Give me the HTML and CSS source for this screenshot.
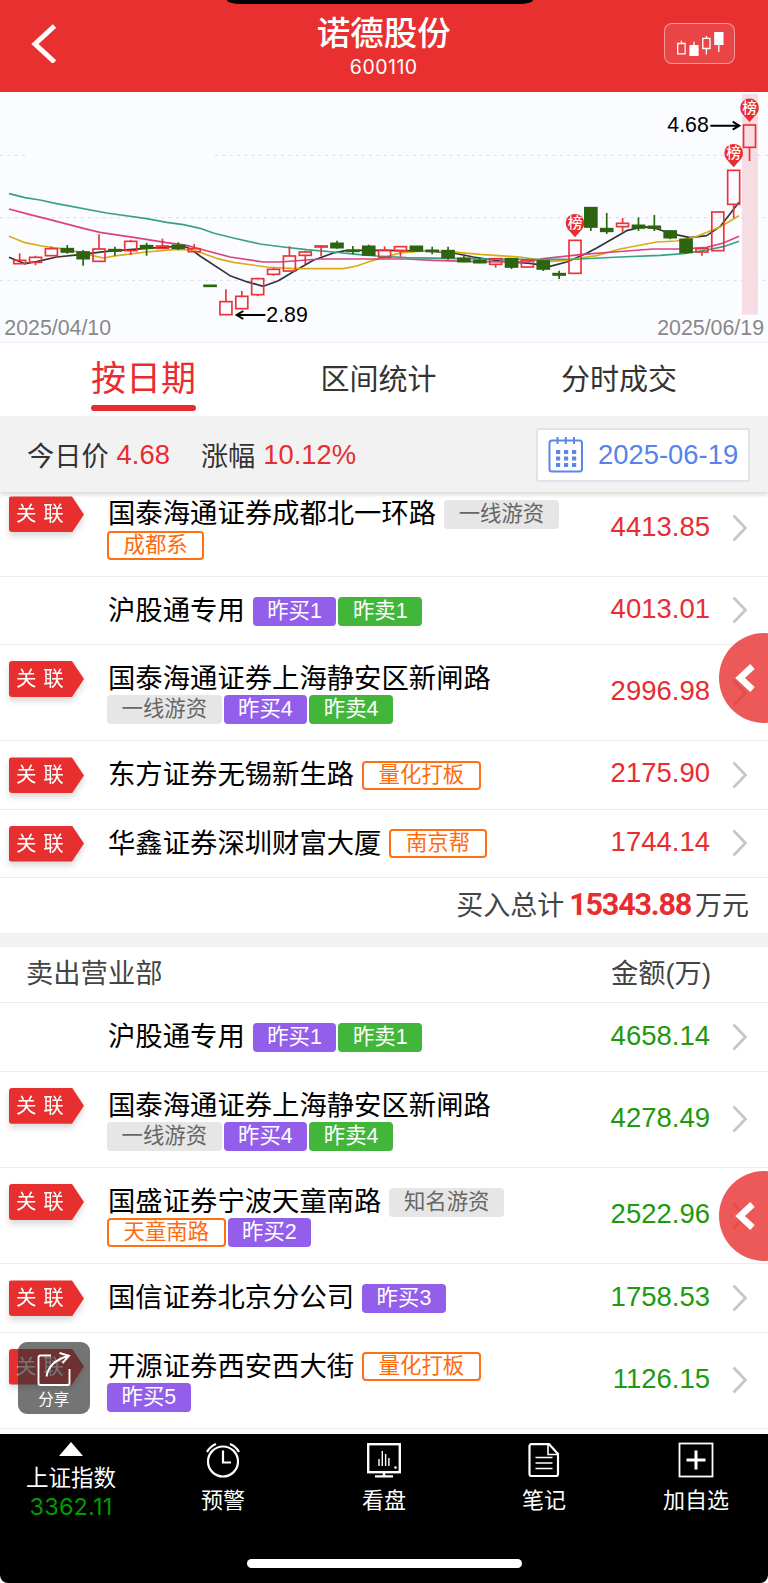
FILE: index.html
```html
<!DOCTYPE html>
<html lang="zh-CN">

<head>
    <meta charset="UTF-8">
    <meta name="viewport" content="width=device-width, initial-scale=1.0">
    <title>诺德股份 600110</title>
    <link rel="stylesheet" href="styles.css">
</head>

<body>
    <div class="page">
        <header class="header">
            <div class="notch"></div>
            <svg class="back" width="28" height="40" viewBox="0 0 28 40"><path d="M24.5 3L5 21L24.5 39" fill="none" stroke="#fff" stroke-width="5"/></svg>
            <div class="title">
                <h1>诺德股份</h1>
                <div class="code">600110</div>
            </div>
            <div class="kline-btn">
                <svg width="48" height="26" viewBox="0 0 48 26">
                    <g fill="none" stroke="#fff" stroke-width="1.3">
                        <path d="M1.7 12.5h7.4v10.3h-7.4zM5.4 12.5v-2.7M18 14v-3.3M26.8 7.3h7.2v10.2h-7.2zM30.4 7.3v-2.3M30.4 17.5v6M42.8 14v7"/>
                    </g>
                    <path d="M13.4 14h9.2v11h-9.2zM38.2 1h9.3v13h-9.3z" fill="#fff"/>
                </svg>
            </div>
        </header>

        <!-- chart units are a third of a pixel -->
        <svg class="chart" id="chart" width="768" height="250" viewBox="0 6 2304 750">
            <rect x="2226" y="12" width="48" height="662" fill="#f6dde3"/>
            <g class="grid">
                <path d="M0 196H75M645 196H2304M0 383H2304M0 571H2304"/>
            </g>
            <g class="ma">
                <polyline stroke="#333338" points="27,502 75,521 110,515 170,501 240,494 320,484 440,475 550,468 570,476 600,498 690,557 740,575 790,589 835,572 880,545 940,511 1000,489 1040,481 1160,481 1300,484 1360,489 1420,501 1500,513 1590,520 1650,529 1700,516 1760,490 1790,474 1880,422 1930,410 1970,416 2010,430 2070,443 2120,437 2160,410 2217,337"/>
                <polyline stroke="#dcab14" points="27,439 75,458 125,468 200,478 250,490 310,504 350,497 440,486 530,478 570,480 600,487 650,505 700,517 800,531 880,536 1030,536 1070,528 1120,511 1160,500 1200,489 1270,483 1340,484 1440,493 1560,501 1650,514 1700,511 1740,504 1790,497 1860,477 1970,456 2030,453 2080,443 2160,411 2217,377"/>
                <polyline stroke="#d94480" points="27,357 90,374 150,389 250,415 300,427 400,442 500,458 560,466 600,477 690,501 790,516 840,516 960,507 1220,507 1300,511 1440,515 1580,516 1630,506 1740,494 1840,486 1960,477 2040,477 2120,472 2170,459 2217,439"/>
                <polyline stroke="#38a283" points="27,311 75,323 120,330 170,341 320,369 440,386 500,397 550,404 600,415 640,429 700,444 780,462 850,471 920,479 1000,486 1070,493 1130,498 1220,503 1340,505 1490,507 1620,509 1740,507 1860,501 1980,496 2050,491 2120,480 2170,470 2217,454"/>
            </g>
            <g id="candles"></g>
            <g class="arrows">
                <path d="M710 675H796M730 663L710 675L730 687M2131 107H2218M2198 95L2218 107L2198 119"/>
            </g>
            <text class="price" x="799" y="695">2.89</text>
            <text class="price" x="2002" y="127">4.68</text>
            <text class="day" x="13" y="734">2025/04/10</text>
            <text class="day" x="2292" y="734" text-anchor="end">2025/06/19</text>
        </svg>

        <nav class="tabs">
            <a class="tab active">按日期</a>
            <a class="tab">区间统计</a>
            <a class="tab">分时成交</a>
        </nav>

        <div class="bar">
            <span class="label">今日价</span><span class="val">4.68</span>
            <span class="label second">涨幅</span><span class="val">10.12%</span>
            <div class="date">
                <svg width="36" height="36" viewBox="0 0 36 36">
                    <g fill="none" stroke="#5b87e8" stroke-width="2">
                        <rect x="1.5" y="3.5" width="32.5" height="31" rx="2.5"/>
                        <path d="M9.5 0v7M17.8 0v7M26 0v7"/>
                    </g>
                    <path d="M8 15h20.2M8 21.5h20.2M8 28h20.2" stroke="#5b87e8" stroke-width="4" stroke-dasharray="4.2 3.8"/>
                </svg>
                <span>2025-06-19</span>
            </div>
        </div>

        <section class="list buy">
            <div class="row tall">
                <div class="mark"><span>关 联</span></div>
                <div class="info"><span class="name">国泰海通证券成都北一环路</span><span class="tag gray">一线游资</span><span class="tag orange">成都系</span></div>
                <div class="amount">4413.85</div>
                <svg class="more" viewBox="0 0 16 28"><path d="M1.5 1.5L13.5 14L1.5 26.5"/></svg>
            </div>
            <div class="row">
                <div class="info"><span class="name">沪股通专用</span><span class="tag purple">昨买1</span><span class="tag green">昨卖1</span></div>
                <div class="amount">4013.01</div>
                <svg class="more" viewBox="0 0 16 28"><path d="M1.5 1.5L13.5 14L1.5 26.5"/></svg>
            </div>
            <div class="row tall">
                <div class="mark"><span>关 联</span></div>
                <div class="info"><span class="name">国泰海通证券上海静安区新闸路</span><span class="tag gray">一线游资</span><span class="tag purple">昨买4</span><span class="tag green">昨卖4</span></div>
                <div class="amount">2996.98</div>
                <svg class="more" viewBox="0 0 16 28"><path d="M1.5 1.5L13.5 14L1.5 26.5"/></svg>
            </div>
            <div class="row">
                <div class="mark"><span>关 联</span></div>
                <div class="info"><span class="name">东方证券无锡新生路</span><span class="tag orange">量化打板</span></div>
                <div class="amount">2175.90</div>
                <svg class="more" viewBox="0 0 16 28"><path d="M1.5 1.5L13.5 14L1.5 26.5"/></svg>
            </div>
            <div class="row">
                <div class="mark"><span>关 联</span></div>
                <div class="info"><span class="name">华鑫证券深圳财富大厦</span><span class="tag orange">南京帮</span></div>
                <div class="amount">1744.14</div>
                <svg class="more" viewBox="0 0 16 28"><path d="M1.5 1.5L13.5 14L1.5 26.5"/></svg>
            </div>
        </section>
        <div class="total">买入总计<b>15343.88</b>万元</div>

        <div class="list-head"><span>卖出营业部</span><span>金额(万)</span></div>
        <section class="list sell">
            <div class="row">
                <div class="info"><span class="name">沪股通专用</span><span class="tag purple">昨买1</span><span class="tag green">昨卖1</span></div>
                <div class="amount">4658.14</div>
                <svg class="more" viewBox="0 0 16 28"><path d="M1.5 1.5L13.5 14L1.5 26.5"/></svg>
            </div>
            <div class="row tall">
                <div class="mark"><span>关 联</span></div>
                <div class="info"><span class="name">国泰海通证券上海静安区新闸路</span><span class="tag gray">一线游资</span><span class="tag purple">昨买4</span><span class="tag green">昨卖4</span></div>
                <div class="amount">4278.49</div>
                <svg class="more" viewBox="0 0 16 28"><path d="M1.5 1.5L13.5 14L1.5 26.5"/></svg>
            </div>
            <div class="row tall">
                <div class="mark"><span>关 联</span></div>
                <div class="info"><span class="name">国盛证券宁波天童南路</span><span class="tag gray">知名游资</span><span class="tag orange">天童南路</span><span class="tag purple">昨买2</span></div>
                <div class="amount">2522.96</div>
                <svg class="more" viewBox="0 0 16 28"><path d="M1.5 1.5L13.5 14L1.5 26.5"/></svg>
            </div>
            <div class="row">
                <div class="mark"><span>关 联</span></div>
                <div class="info"><span class="name">国信证券北京分公司</span><span class="tag purple">昨买3</span></div>
                <div class="amount">1758.53</div>
                <svg class="more" viewBox="0 0 16 28"><path d="M1.5 1.5L13.5 14L1.5 26.5"/></svg>
            </div>
            <div class="row tall">
                <div class="mark"><span>关 联</span></div>
                <div class="info"><span class="name">开源证券西安西大街</span><span class="tag orange">量化打板</span><span class="tag purple">昨买5</span></div>
                <div class="amount">1126.15</div>
                <svg class="more" viewBox="0 0 16 28"><path d="M1.5 1.5L13.5 14L1.5 26.5"/></svg>
            </div>
        </section>

        <footer class="footer">
            <div class="menu">
                <div class="item index">
                    <svg width="24" height="14" viewBox="0 0 24 14"><path d="M12 0L24 14H0z" fill="#fff"/></svg>
                    <span>上证指数</span>
                    <span class="num">3362.11</span>
                </div>
                <div class="item">
                    <svg width="36" height="36" viewBox="0 0 36 36" fill="none" stroke="#fff" stroke-width="2.2">
                        <circle cx="18" cy="19.5" r="15"/>
                        <path d="M18 8.5v12h8M2 10Q5 4.5 11 2M34 10Q31 4.5 25 2"/>
                    </svg>
                    <span>预警</span>
                </div>
                <div class="item">
                    <svg width="36" height="36" viewBox="0 0 36 36" fill="none" stroke="#fff" stroke-width="2.4">
                        <rect x="2.2" y="2.2" width="31.6" height="28"/>
                        <path d="M18 30v4M9 34.4h18"/>
                        <path d="M13 17v7M16.3 9v15M19.6 12v12M22.9 16v8" stroke-width="1.4"/>
                        <circle cx="29.5" cy="25.5" r="1.3" fill="#fff" stroke="none"/>
                    </svg>
                    <span>看盘</span>
                </div>
                <div class="item">
                    <svg width="36" height="36" viewBox="0 0 36 36" fill="none" stroke="#fff" stroke-width="2.2">
                        <path d="M5.5 2.1H23L32 12V32a2 2 0 0 1-2 2H5.5a2 2 0 0 1-2-2V4.1a2 2 0 0 1 2-2z"/>
                        <path d="M22 2.5V12.5H32" stroke-width="1.6"/>
                        <path d="M9.5 15.5H26.5M9.5 21H26.5M9.5 26.5H26.5" stroke-width="1.7"/>
                    </svg>
                    <span>笔记</span>
                </div>
                <div class="item">
                    <svg width="36" height="36" viewBox="0 0 36 36" fill="none" stroke="#fff">
                        <rect x="1.5" y="1.5" width="33" height="33" stroke-width="1.8"/>
                        <path d="M18 8.5v19M8.5 18h19" stroke-width="3"/>
                    </svg>
                    <span>加自选</span>
                </div>
            </div>
            <div class="home"></div>
        </footer>

        <div class="float first"><svg width="22" height="30" viewBox="0 0 22 30"><path d="M17.5 3.5L5 15L17.5 26.5"/></svg></div>
        <div class="float last"><svg width="22" height="30" viewBox="0 0 22 30"><path d="M17.5 3.5L5 15L17.5 26.5"/></svg></div>
        <div class="share">
            <svg width="36" height="36" viewBox="0 0 36 36" fill="none" stroke="#fff" stroke-width="1.9">
                <path d="M15 4.5H4.5a2 2 0 0 0-2 2V32a2 2 0 0 0 2 2H31.5a2 2 0 0 0 2-2V18"/>
                <path d="M10.5 25.5C12 16 18 9 32 5M23.5 2L33 4.8L26.5 12"/>
            </svg>
            <span>分享</span>
        </div>
    </div>

    <script>
        // [direction, body top, body bottom, high, low]
        const data = [
            ['up', 511, 521, 490, 521], ['up', 502, 517, 497, 526], ['up', 476, 497, 470, 497],
            ['down', 476, 486, 465, 491], ['down', 486, 506, 480, 527], ['up', 477, 514, 433, 514],
            ['down', 479, 483, 470, 497], ['up', 454, 482, 449, 495], ['down', 467, 475, 458, 497],
            ['up', 468, 475, 446, 475], ['down', 466, 475, 457, 480], ['up', 476, 485, 462, 485],
            ['down', 586, 589, 586, 589], ['up', 635, 674, 598, 674], ['up', 619, 656, 603, 656],
            ['up', 566, 614, 563, 619], ['up', 538, 553, 534, 557], ['up', 498, 543, 469, 543],
            ['up', 486, 496, 482, 523], ['up', 468, 471, 466, 499], ['down', 460, 473, 452, 476],
            ['down', 481, 484, 468, 493], ['down', 469, 495, 464, 498], ['up', 481, 502, 469, 502],
            ['up', 470, 482, 470, 500], ['down', 469, 483, 469, 483], ['down', 481, 484, 470, 493],
            ['down', 482, 503, 470, 509], ['down', 505, 515, 498, 517], ['down', 511, 518, 503, 520],
            ['up', 506, 523, 506, 533], ['down', 506, 531, 504, 537], ['up', 511, 531, 511, 533],
            ['down', 513, 537, 512, 543], ['down', 551, 555, 542, 567], ['up', 451, 550, 451, 550],
            ['down', 353, 411, 352, 423], ['down', 416, 424, 369, 432], ['up', 400, 410, 384, 425],
            ['down', 406, 414, 382, 423], ['down', 409, 414, 375, 423], ['down', 423, 443, 421, 448],
            ['down', 448, 487, 446, 492], ['up', 476, 486, 476, 497], ['up', 366, 482, 366, 482],
            ['up', 241, 343, 241, 384], ['up', 105, 172, 105, 213]
        ];
        const marked = [35, 45, 46];
        let html = '';

        data.forEach(([dir, top, bottom, high, low], i) => {
            const x = 59 + 47.6 * i;
            html += `<g class="${dir}"><path d="M${x} ${high}V${top}M${x} ${bottom}V${low}"/>`;
            html += `<rect x="${x - 18}" y="${top}" width="36" height="${bottom - top}"/></g>`;
            if (marked.includes(i)) {
                const y = top - 51;
                html += `<path class="pin" d="M${x - 22} ${y + 17}A28 28 0 1 1 ${x + 22} ${y + 17}L${x} ${y + 42}z"/>`;
                html += `<text class="pin-text" x="${x}" y="${y + 15}">榜</text>`;
            }
        });
        document.getElementById('candles').innerHTML = html;
    </script>
</body>
</html>
```

FILE: styles.css
```css
body {
    margin: 0;
    background-color: #ffffff;
    font-family: "Liberation Sans", "Noto Sans CJK SC", sans-serif;
    color: #333333;
}

.page {
    position: relative;
    width: 768px;
    height: 1583px;
    overflow: hidden;
    display: flex;
    flex-direction: column;
}

.page > * {
    flex-shrink: 0;
}

/* header */
.header {
    position: relative;
    box-sizing: border-box;
    height: 92px;
    padding: 0 33.5px 0 30px;
    display: flex;
    justify-content: space-between;
    align-items: flex-start;
    background-color: #e83031;
    color: #ffffff;
}

.notch {
    position: absolute;
    left: 227px;
    top: 0;
    width: 306px;
    height: 4px;
    border-radius: 0 0 14px 14px / 0 0 4px 4px;
    background-color: #000000;
}

.back {
    width: 28px;
    margin: 22.5px 46px 0 0;
}

.title {
    text-align: center;
}

h1 {
    margin: 12.5px 0 0;
    font-size: 33.5px;
    line-height: 42px;
    font-weight: 500;
}

.code {
    font-family: Inter, sans-serif;
    font-size: 19.5px;
    line-height: 24px;
    letter-spacing: 0.5px;
}

.kline-btn {
    box-sizing: border-box;
    width: 71px;
    height: 41px;
    margin-top: 23px;
    padding: 7px 0 0 11px;
    border: 1px solid rgba(255, 255, 255, 0.45);
    border-radius: 8px;
    background-color: rgba(255, 255, 255, 0.1);
}

/* chart */
.chart {
    display: block;
    background-color: #fbfcff;
    border-bottom: 1px solid #eceef2;
    font-size: 64px;
}

.grid path {
    stroke: #d9dbe2;
    stroke-width: 3;
    stroke-dasharray: 9 13;
}

.ma polyline {
    fill: none;
    stroke-width: 5;
    stroke-linejoin: round;
}

.up path,
.up rect {
    fill: none;
    stroke: #ea3338;
    stroke-width: 5;
}

.down path,
.down rect {
    fill: #2d640f;
    stroke: #2d640f;
    stroke-width: 5;
}

.pin {
    fill: #e82c2f;
}

.pin-text {
    fill: #ffffff;
    font-size: 44px;
    font-weight: 500;
    text-anchor: middle;
}

.arrows path {
    fill: none;
    stroke: #000000;
    stroke-width: 6;
}

.day {
    fill: #888888;
}

/* tabs */
.tabs {
    height: 73px;
    padding: 0 91px;
    display: flex;
    justify-content: space-between;
}

.tab {
    font-size: 29px;
    line-height: 74px;
}

.tab.active {
    font-size: 35px;
    line-height: 72px;
    color: #e82d30;
}

.tab.active::after {
    content: "";
    display: block;
    height: 5.5px;
    margin-top: -10px;
    border-radius: 3px;
    background-color: #e82d30;
}

/* price bar */
.bar {
    position: relative;
    z-index: 1;
    box-sizing: border-box;
    height: 76px;
    padding: 1px 18px 0 27px;
    display: flex;
    align-items: center;
    background-color: #f2f2f2;
    box-shadow: 0 3px 4px rgba(0, 0, 0, 0.14);
    font-size: 27.2px;
}

.val {
    margin-left: 8px;
    font-size: 27.4px;
    color: #e82d30;
}

.label {
    margin-top: -2px;
}

.second {
    margin-left: 31px;
}

.date {
    box-sizing: border-box;
    width: 214px;
    height: 54px;
    margin-left: auto;
    padding-left: 10px;
    display: flex;
    align-items: center;
    border: 2px solid #dde2ec;
    border-radius: 3px;
    background-color: #ffffff;
    color: #5583eb;
}

.date span {
    margin-left: 14px;
    font-size: 27.4px;
}

/* broker list */
.buy {
    margin-top: -11.6px;
}

.row {
    position: relative;
    box-sizing: border-box;
    height: 68.2px;
    padding: 0 20px 0 107px;
    display: flex;
    align-items: center;
    border-bottom: 1px solid #ececec;
}

.row.tall {
    height: 96.4px;
}

.info {
    align-self: flex-start;
    width: 457px;
    padding-top: 19px;
    display: flex;
    flex-wrap: wrap;
    align-items: center;
}

.name {
    margin: 0 8px 0 1px;
    font-size: 27.35px;
    line-height: 30.6px;
    color: #000000;
}

.tag {
    box-sizing: border-box;
    height: 29px;
    margin: 0.8px 2px 0.8px 0;
    padding: 0 14.5px;
    border-radius: 4px;
    font-size: 21.4px;
    line-height: 28px;
}

.gray {
    background-color: #e6e6e6;
    color: #666666;
}

.purple {
    background-color: #935eea;
    color: #ffffff;
}

.green {
    background-color: #42b63b;
    color: #ffffff;
}

.orange {
    border: 2px solid #ff6f14;
    line-height: 24px;
    color: #ff6a0d;
}

/* ribbon pointing at the broker name */
.mark {
    position: absolute;
    left: 9px;
    top: 16px;
    filter: drop-shadow(0 4px 3px rgba(0, 0, 0, 0.15));
}

.mark span {
    display: block;
    width: 75px;
    height: 36px;
    box-sizing: border-box;
    padding-left: 7px;
    border-radius: 3px;
    background-color: #e82f30;
    clip-path: polygon(0 0, 84% 0, 100% 50%, 84% 100%, 0 100%);
    font-size: 20.5px;
    line-height: 35px;
    word-spacing: 1px;
    color: #ffffff;
}

.amount {
    margin: 0 22px 3px auto;
    font-size: 27.5px;
}

.buy .amount {
    color: #e82d30;
}

.sell .amount {
    color: #21990f;
}

.more {
    width: 16px;
    height: 28px;
}

.more path {
    fill: none;
    stroke: #c6c6c6;
    stroke-width: 2.7;
}

.total {
    box-sizing: border-box;
    height: 69.2px;
    padding-right: 19px;
    border-bottom: 14px solid #f2f2f2;
    text-align: right;
    font-size: 27px;
    line-height: 56px;
    color: #444444;
}

.total b {
    margin: 0 4px 0 5px;
    font-family: Roboto, sans-serif;
    font-size: 30.5px;
    line-height: 50px;
    letter-spacing: -1.2px;
    color: #e82d30;
}

.list-head {
    box-sizing: border-box;
    height: 56.5px;
    padding: 0 57px 0 26px;
    display: flex;
    justify-content: space-between;
    border-bottom: 1px solid #ececec;
    font-size: 27.3px;
    line-height: 54px;
    color: #444444;
}

/* bottom menu */
.footer {
    height: 149px;
    margin-top: auto;
    border-radius: 0 0 8px 8px;
    background-color: #000000;
    color: #ffffff;
}

.menu {
    height: 125px;
    display: grid;
    grid-template-columns: 142px 162px 160px 160px 144px;
}

.item {
    padding-top: 8px;
    display: flex;
    flex-direction: column;
    align-items: center;
    font-size: 22px;
    line-height: 28px;
}

.item span {
    margin-top: 9px;
}

.item.index span {
    font-size: 22.5px;
}

.item.index span.num {
    margin-top: 0;
    font-family: Inter, sans-serif;
    font-size: 23.4px;
    letter-spacing: 0.2px;
    color: #009900;
}

.home {
    width: 275px;
    height: 9px;
    margin-left: 247px;
    border-radius: 5px;
    background-color: #ffffff;
}

/* floating buttons over the list */
.float {
    position: absolute;
    left: 719px;
    width: 90px;
    height: 90px;
    box-sizing: border-box;
    padding: 30px 0 0 16px;
    border-radius: 50%;
    background-color: rgba(232, 46, 46, 0.8);
}

.float path {
    fill: none;
    stroke: #ffffff;
    stroke-width: 6.5;
}

.first {
    top: 633px;
}

.last {
    top: 1171px;
}

.share {
    position: absolute;
    left: 18px;
    top: 1342px;
    width: 71.5px;
    height: 72px;
    display: flex;
    flex-direction: column;
    align-items: center;
    border-radius: 9px;
    background-color: rgba(50, 50, 50, 0.68);
    font-size: 15.5px;
    line-height: 20px;
    color: #ffffff;
}

.share svg {
    margin-top: 9px;
}

.share span {
    margin-top: 3px;
}
```
